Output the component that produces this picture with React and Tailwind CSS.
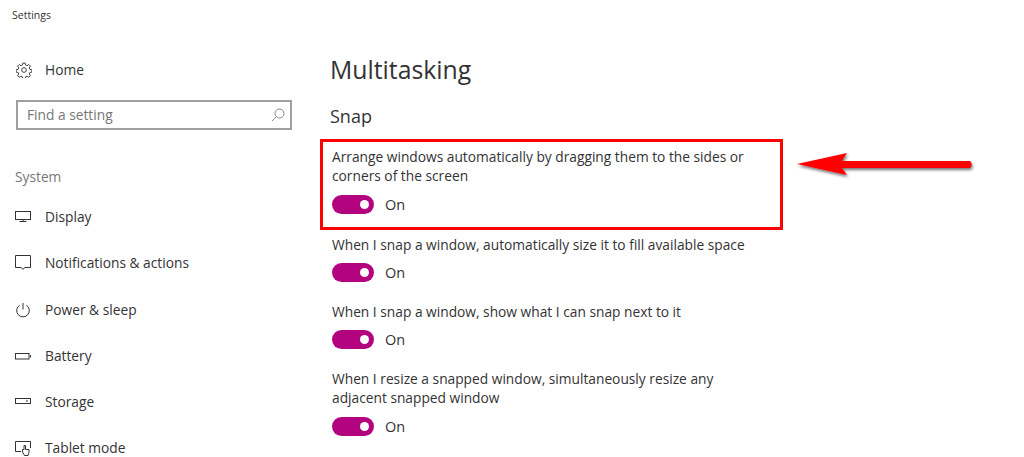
import React from "react";

function Icon({ children }) {
  return (
    <svg width="16" height="16" viewBox="0 0 16 16" fill="none" stroke="#333" strokeWidth="1" className="shrink-0">
      {children}
    </svg>
  );
}

const nav = [
  ["Display", <><rect x="0.5" y="2.5" width="15" height="8" /><path d="M8 10.5v2M4.5 12.5h7" /></>],
  ["Notifications & actions", <path d="M0.5 0.5h15v12h-5.5l-2 1.8-2-1.8h-5.5z" />],
  ["Power & sleep", <><path d="M8 1v6.5" /><path d="M4.7 3.2a6.3 6.3 0 1 0 6.6 0" /></>],
  ["Battery", <><rect x="0.5" y="5.5" width="13.5" height="5.5" /><path d="M15.5 7v2.5" /></>],
  ["Storage", <><rect x="0.5" y="4.5" width="15" height="5" /><path d="M11 7h2" /></>],
  ["Tablet mode", <><path d="M6 11.5H0.5V1.5h15V8" /><path d="M9.5 15.5 7.5 12V9.5h1.5V5.5h1.5v4h3.5v3l-1 3z" /></>],
];

const options = [
  { lines: "When I snap a window, automatically size it to fill available space", cls: "mt-[5px]", toggle: "mt-[9px]" },
  { lines: "When I snap a window, show what I can snap next to it", cls: "mt-[20px]", toggle: "mt-[9px]" },
  { lines: <>When I resize a snapped window, simultaneously resize any<br />adjacent snapped window</>, cls: "mt-[20px]", toggle: "mt-[10px]" },
];

function Toggle({ className }) {
  return (
    <div className={`${className} flex items-center gap-[11px] h-[19px]`}>
      <div className="w-[42px] h-[19px] rounded-full bg-[#b4037f] flex items-center justify-end pr-[5px]">
        <div className="w-[9px] h-[9px] rounded-full bg-white" />
      </div>
      <span className="text-[14.5px] leading-[19px] text-[#333]">On</span>
    </div>
  );
}

export default function App() {
  return (
    <div className="relative w-[1024px] h-[457px] overflow-hidden bg-white text-[#333] font-['Open_Sans','Noto_Sans',sans-serif] flex">
      <aside className="w-[330px] shrink-0">
        <div className="pl-3 pt-[8px] text-[10.5px] leading-[15px]">Settings</div>
        <div className="pl-[16px] mt-[37px] flex items-center gap-[13px] h-[20px]">
          <svg width="16" height="16" viewBox="0 0 24 24" fill="none" stroke="#333" strokeWidth="1.4" className="shrink-0">
            <circle cx="12" cy="12" r="3.5" />
            <path d="M10.3 1.5h3.4l.6 3 2.3 1 2.6-1.7 2.4 2.4-1.7 2.6 1 2.3 3 .6v3.4l-3 .6-1 2.3 1.7 2.6-2.4 2.4-2.6-1.7-2.3 1-.6 3h-3.4l-.6-3-2.3-1-2.6 1.7-2.4-2.4 1.7-2.6-1-2.3-3-.6v-3.4l3-.6 1-2.3-1.7-2.6 2.4-2.4 2.6 1.7 2.3-1z" />
          </svg>
          <span className="text-[13.75px] leading-[20px]">Home</span>
        </div>
        <div className="ml-[16px] mt-[20px] w-[276px] h-[30px] border-2 border-[#a0a0a0] flex items-center justify-between pl-[9px] pr-[5px]">
          <span className="text-[13.75px] text-[#777]">Find a setting</span>
          <svg width="14" height="14" viewBox="0 0 14 14" fill="none" stroke="#888" strokeWidth="1">
            <circle cx="8.5" cy="5.5" r="4.5" />
            <path d="M5.2 8.8 1 13" />
          </svg>
        </div>
        <div className="pl-[15px] mt-[37px] text-[13.75px] leading-[20px] text-[#777]">System</div>
        <div className="mt-[20px] flex flex-col gap-[26.25px]">
          {nav.map(([label, icon]) => (
            <div key={label} className="pl-[15px] flex items-center gap-[14px] h-[20px]">
              <Icon>{icon}</Icon>
              <span className="text-[13.75px] leading-[20px]">{label}</span>
            </div>
          ))}
        </div>
      </aside>
      <main className="flex-1">
        <h1 className="mt-[51px] text-[24.8px] leading-[36px] font-normal">Multitasking</h1>
        <h2 className="mt-[17px] text-[18px] leading-[24px] font-normal">Snap</h2>
        <section className="mt-[11px] -ml-[10px] w-[463px] h-[91px] border-[3px] border-[#ff0000] pl-[9px] pt-[5px]">
          <p className="text-[13.75px] leading-[19px] whitespace-nowrap">
            Arrange windows automatically by dragging them to the sides or<br />corners of the screen
          </p>
          <Toggle className="mt-[10px]" />
        </section>
        {options.map((o, i) => (
          <div key={i} className={`${o.cls} pl-[2px]`}>
            <p className="text-[13.75px] leading-[19px] whitespace-nowrap">{o.lines}</p>
            <Toggle className={o.toggle} />
          </div>
        ))}
      </main>
      <svg className="absolute left-[797px] top-[150px]" width="185" height="34" viewBox="0 0 185 34" fill="none">
        <defs>
          <filter id="sh" x="-10%" y="-40%" width="120%" height="200%">
            <feDropShadow dx="1" dy="2" stdDeviation="1.5" floodColor="#000" floodOpacity="0.55" />
          </filter>
        </defs>
        <g filter="url(#sh)">
          <path d="M0 14 L50 3 L45 11 L173 11 Q176.5 14.5 173 18 L45 18 L50 25 Z" fill="#ff0000" />
        </g>
      </svg>
    </div>
  );
}
